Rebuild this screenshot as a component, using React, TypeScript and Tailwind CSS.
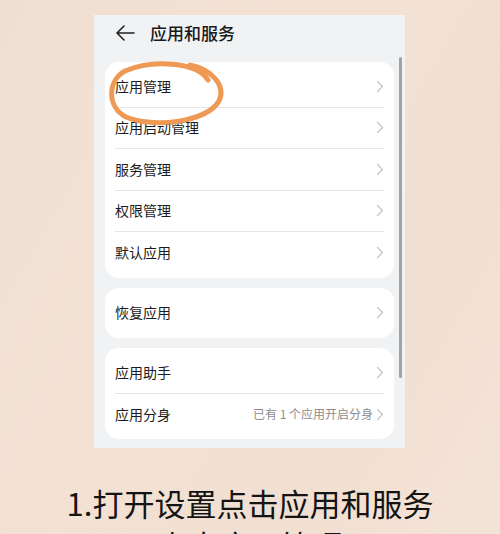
import React from 'react';

const cjk = "font-['Noto_Sans_CJK_SC','Noto_Sans',sans-serif]";

function Chevron() {
  return (
    <svg width="8" height="13" viewBox="0 0 8 13" className="shrink-0">
      <path d="M1.5 1.5 L6.5 6.5 L1.5 11.5" fill="none" stroke="#c4c4c6" strokeWidth="1.3" strokeLinecap="round" strokeLinejoin="round" />
    </svg>
  );
}

function Row({ label, value, last }: { label: string; value?: string; last?: boolean }) {
  return (
    <div className="flex h-[41.5px] flex-col">
      <div className="flex flex-1 items-center justify-between">
        <span className="text-[14px] text-[#1b1b1b]">{label}</span>
        <div className="flex items-center gap-[3px]">
          {value && <span className="text-[12px] text-[#8d8d8f]">{value}</span>}
          <Chevron />
        </div>
      </div>
      {!last && <div className="h-px bg-[#e6e6e8]" />}
    </div>
  );
}

function Card({ rows }: { rows: { label: string; value?: string }[] }) {
  return (
    <div className="rounded-[14px] bg-white px-[10px] py-[4px]">
      {rows.map((r, i) => (
        <Row key={r.label} label={r.label} value={r.value} last={i === rows.length - 1} />
      ))}
    </div>
  );
}

export default function App() {
  return (
    <div
      className={`relative h-[534px] w-[500px] overflow-hidden bg-[linear-gradient(120deg,#efdfd2_0%,#f3e2d4_45%,#f1dfd1_70%,#f4e4d7_100%)] ${cjk}`}
    >
      <div className="ml-[94px] mt-[15px] flex h-[433px] w-[311px] flex-col bg-[#f1f2f4]">
        <div className="mb-[12px] flex h-[35px] items-center pl-[21px]">
          <svg width="20" height="16" viewBox="0 0 20 16">
            <path d="M19 8 H2 M9 1 L2 8 L9 15" fill="none" stroke="#222" strokeWidth="1.6" strokeLinecap="round" strokeLinejoin="round" />
          </svg>
          <span className="ml-[15px] text-[17px] font-medium text-[#1a1a1a]">应用和服务</span>
        </div>
        <div className="flex flex-col gap-[10.5px] px-[11px]">
          <Card
            rows={[
              { label: '应用管理' },
              { label: '应用启动管理' },
              { label: '服务管理' },
              { label: '权限管理' },
              { label: '默认应用' },
            ]}
          />
          <Card rows={[{ label: '恢复应用' }]} />
          <Card rows={[{ label: '应用助手' }, { label: '应用分身', value: '已有 1 个应用开启分身' }]} />
        </div>
      </div>

      {/* scrollbar */}
      <div className="absolute left-[399px] top-[57px] h-[321px] w-[3px] rounded-full bg-[#a2a2a4]" />

      {/* hand-drawn highlight */}
      <svg className="pointer-events-none absolute left-0 top-0" width="500" height="534" viewBox="0 0 500 534">
        <path
          d="M208 80 C197 62 152 59 125 71 C107 81 107 107 126 117 C152 128 206 123 219 101 C226 86 213 70 190 65"
          fill="none"
          stroke="#ee9a55"
          strokeWidth="5"
          strokeLinecap="round"
          strokeLinejoin="round"
        />
      </svg>

      <div className="mt-[34px] flex flex-col items-center text-[31px] leading-[42px] text-[#141414]">
        <span>1.打开设置点击应用和服务</span>
        <span>点击应用管理</span>
      </div>
    </div>
  );
}
